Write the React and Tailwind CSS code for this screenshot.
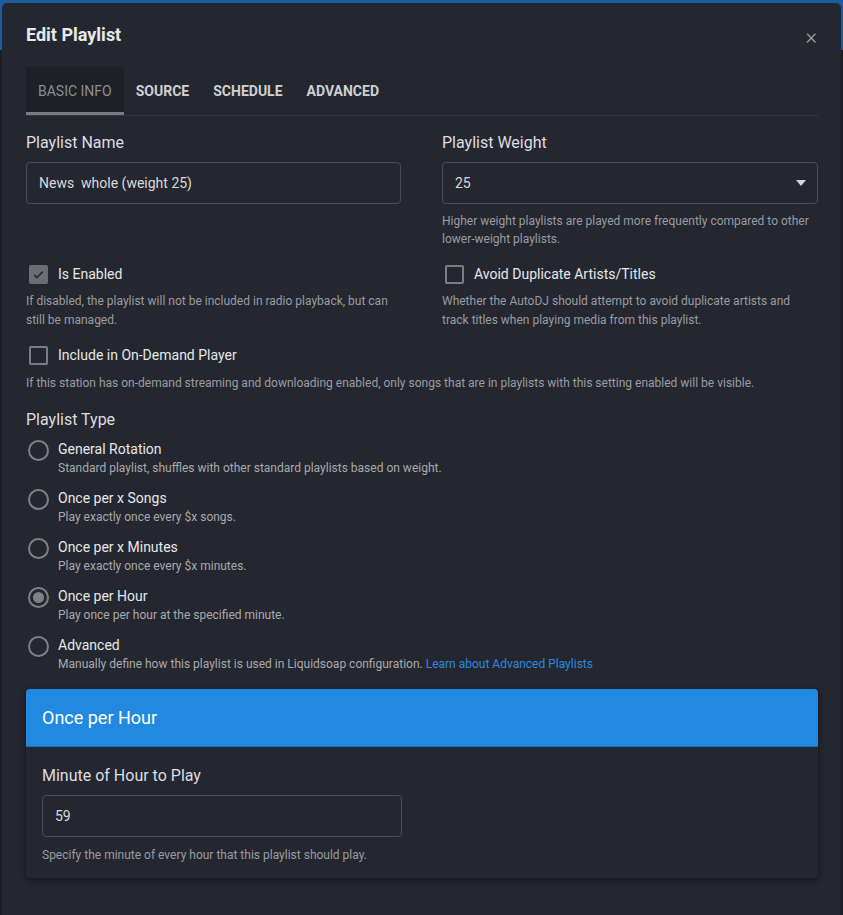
import React, { useState } from "react";

const types = [
  { name: "General Rotation", desc: "Standard playlist, shuffles with other standard playlists based on weight." },
  { name: "Once per x Songs", desc: "Play exactly once every $x songs." },
  { name: "Once per x Minutes", desc: "Play exactly once every $x minutes." },
  { name: "Once per Hour", desc: "Play once per hour at the specified minute." },
  { name: "Advanced", desc: "Manually define how this playlist is used in Liquidsoap configuration.", link: "Learn about Advanced Playlists" },
];

function Checkbox({ checked, label }) {
  return (
    <div className="flex items-center h-[22px]">
      {checked ? (
        <span className="w-[19px] h-[19px] ml-[3px] rounded-[2px] bg-[#6c6e73] flex items-center justify-center">
          <svg width="13" height="13" viewBox="0 0 24 24" fill="none" stroke="#2a2d34" strokeWidth="3.2">
            <path d="M4 12.5l5 5L20 6.5" />
          </svg>
        </span>
      ) : (
        <span className="w-[19px] h-[19px] ml-[3px] rounded-[2px] border-2 border-[#7b7d82]" />
      )}
      <span className="ml-[10px] text-[14px] text-[#e6e7e9]">{label}</span>
    </div>
  );
}

function Radio({ checked }) {
  return (
    <span className="w-[21px] h-[21px] ml-[2px] rounded-full border-2 border-[#7e8085] flex items-center justify-center shrink-0">
      {checked && <span className="w-[11px] h-[11px] rounded-full bg-[#7e8085]" />}
    </span>
  );
}

export default function App() {
  const [tab] = useState("BASIC INFO");
  const tabs = ["BASIC INFO", "SOURCE", "SCHEDULE", "ADVANCED"];

  return (
    <div className="w-[843px] h-[915px] overflow-hidden bg-[#1b1e24] relative font-['Roboto',sans-serif]">
      <div className="h-[50px] bg-[#1d5c9c]" />
      {/* dialog */}
      <div className="absolute left-[2px] top-[3px] w-[839px] h-[930px] bg-[#24272f] rounded-t-[5px]">
        <div className="flex items-center justify-between pl-[24px] pr-[24px] h-[64px]">
          <h1 className="text-[18px] font-bold text-[#e8e9eb] mt-[-1px]">Edit Playlist</h1>
          <span className="text-[#9a9ca1] text-[22px] leading-none mt-[4px] font-light">×</span>
        </div>

        <div className="px-[24px]">
          <div className="flex border-b border-[#33363e] w-[792px]">
            {tabs.map((t) => (
              <div
                key={t}
                className={`h-[48px] px-[12px] flex items-center text-[14px] uppercase ${
                  t === tab
                    ? "bg-[#1e2027] text-[#8c8e93] border-b-[3px] border-[#7a7b80] pt-[3px]"
                    : "font-bold text-[#cfd0d3]"
                }`}
              >
                {t}
              </div>
            ))}
          </div>

          <div className="grid grid-cols-[375px_376px] gap-x-[41px] mt-[15px] w-[792px]">
            <div>
              <div className="text-[16px] text-[#dcdde0] h-[22px]">Playlist Name</div>
              <div className="mt-[9px] h-[42px] border border-[#4a4d55] rounded-[4px] flex items-center px-[12px] text-[14px] text-[#d8d9dc]">
                News&nbsp; whole (weight 25)
              </div>
            </div>
            <div>
              <div className="text-[16px] text-[#dcdde0] h-[22px]">Playlist Weight</div>
              <div className="mt-[9px] h-[42px] border border-[#4a4d55] rounded-[4px] flex items-center justify-between px-[12px] text-[14px] text-[#d8d9dc]">
                <span>25</span>
                <svg width="10" height="6" viewBox="0 0 10 6" className="mr-[-1px]">
                  <path d="M0 0h10L5 6z" fill="#d4d5d8" />
                </svg>
              </div>
              <p className="mt-[8px] text-[12px] leading-[18px] text-[#9a9ca2]">
                Higher weight playlists are played more frequently compared to other lower-weight playlists.
              </p>
            </div>

            <div className="mt-[15px]">
              <Checkbox checked label="Is Enabled" />
              <p className="mt-[7px] text-[12px] leading-[19px] text-[#9a9ca2] pr-[10px]">
                If disabled, the playlist will not be included in radio playback, but can still be managed.
              </p>
            </div>
            <div className="mt-[15px]">
              <Checkbox label="Avoid Duplicate Artists/Titles" />
              <p className="mt-[7px] text-[12px] leading-[19px] text-[#9a9ca2] pr-[20px]">
                Whether the AutoDJ should attempt to avoid duplicate artists and track titles when playing media from this playlist.
              </p>
            </div>
          </div>

          <div className="mt-[14px]">
            <Checkbox label="Include in On-Demand Player" />
            <p className="mt-[8px] text-[12px] leading-[19px] text-[#9a9ca2]">
              If this station has on-demand streaming and downloading enabled, only songs that are in playlists with this setting enabled will be visible.
            </p>
          </div>

          <div className="mt-[15px] text-[16px] text-[#dcdde0] h-[22px]">Playlist Type</div>
          <div className="mt-[9px] flex flex-col gap-[11px]">
            {types.map((t) => (
              <div key={t.name} className="flex">
                <div className="pt-[1px]">
                  <Radio checked={t.name === "Once per Hour"} />
                </div>
                <div className="ml-[9px]">
                  <div className="text-[14px] text-[#e6e7e9] leading-[20px]">{t.name}</div>
                  <div className="text-[12px] text-[#a8aaae] leading-[18px]">
                    {t.desc}
                    {t.link && <span className="text-[#2a8ae0]"> {t.link}</span>}
                  </div>
                </div>
              </div>
            ))}
          </div>

          {/* schedule card */}
          <div className="mt-[16px] w-[792px] rounded-[4px] bg-[#24272f] shadow-[0_2px_6px_rgba(0,0,0,0.45)] overflow-hidden">
            <div className="h-[58px] bg-[#2289e1] border-b border-[#1c6fb8] flex items-center px-[16px]">
              <h2 className="text-[18px] text-white">Once per Hour</h2>
            </div>
            <div className="px-[16px] pt-[17px] pb-[14px]">
              <div className="text-[16px] text-[#dcdde0] h-[22px]">Minute of Hour to Play</div>
              <div className="mt-[9px] w-[360px] h-[42px] border border-[#4a4d55] rounded-[4px] flex items-center px-[12px] text-[14px] text-[#d8d9dc]">
                59
              </div>
              <p className="mt-[9px] text-[12px] leading-[18px] text-[#9a9ca2]">
                Specify the minute of every hour that this playlist should play.
              </p>
            </div>
          </div>
        </div>
      </div>
    </div>
  );
}
